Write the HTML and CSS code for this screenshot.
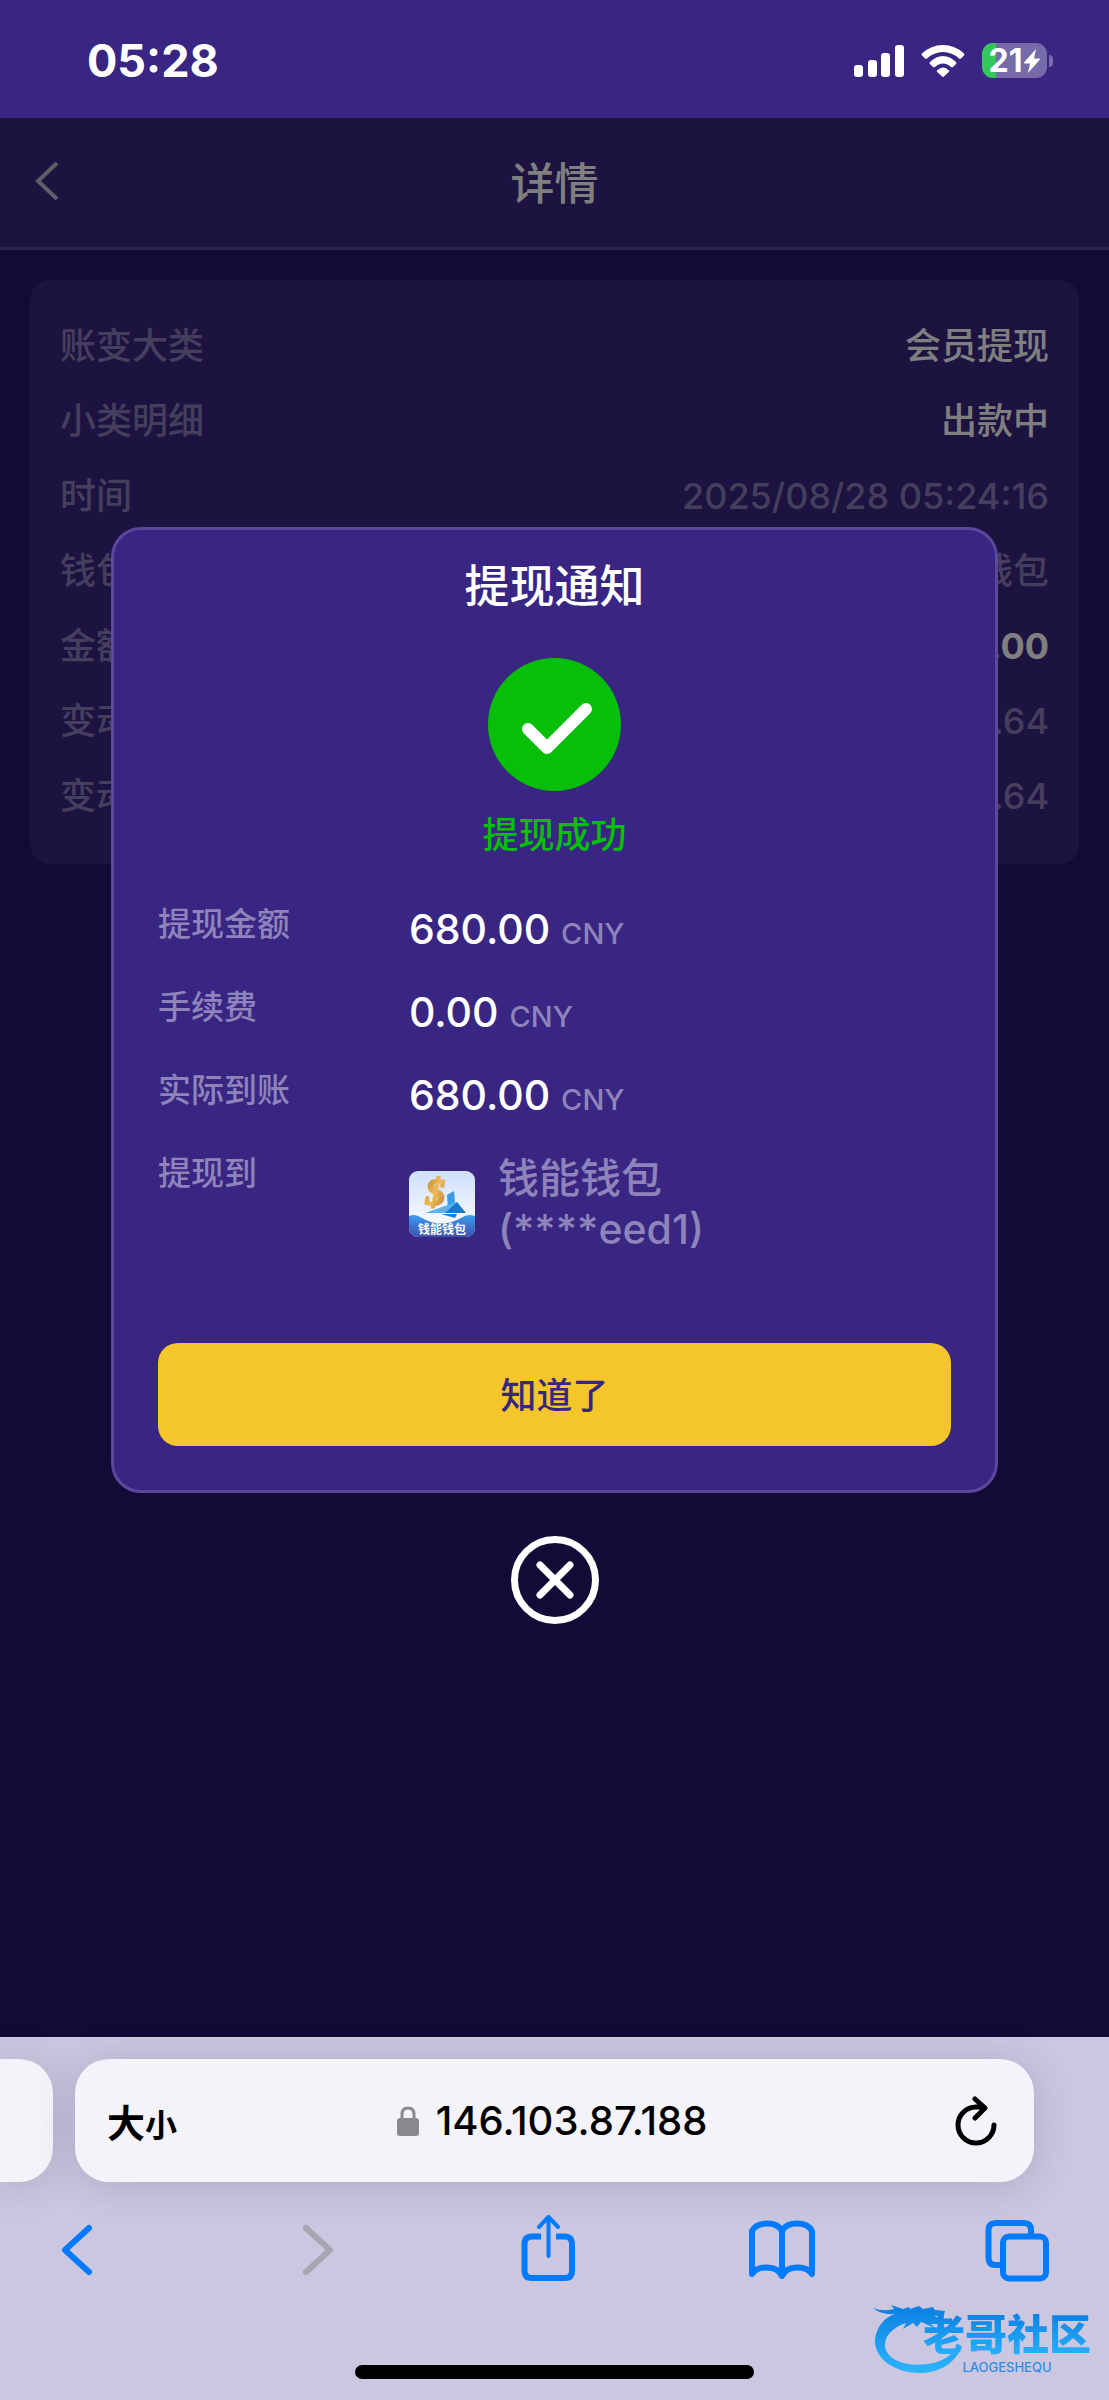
FILE: index.html
```
<!DOCTYPE html>
<html lang="zh-CN">
  <head>
    <meta charset="UTF-8" />
    <meta name="viewport" content="width=device-width, initial-scale=1.0" />
    <title>详情</title>
    <link rel="stylesheet" href="styles.css">
  </head>
  <body>
    <div class="status-bar">
      <time>05:28</time>
      <div class="status-icons">
        <svg width="50" height="32" viewBox="0 0 50 32" fill="#fff">
          <rect x="0" y="20" width="9" height="12" rx="3" />
          <rect x="14" y="15" width="9" height="17" rx="3" />
          <rect x="27" y="8" width="9" height="24" rx="3" />
          <rect x="41" y="0" width="9" height="32" rx="3" />
        </svg>
        <svg width="44" height="32" viewBox="0 0 44 32" fill="#fff">
          <path d="M1 8.500Q10 0 22 0T43 8.500Q44 9.500 43 10.500L40 13.500Q39 14 38 13.500Q31 7 22 7T6 13.500Q5 14 4 13.500L1 10.500Q0 9.500 1 8.500Z" />
          <path d="M9 17Q15 11 22 11T35 17Q36 18 35 19L32 22Q31 22.500 30 22Q26.500 18.500 22 18.500T14 22Q13 22.500 12 22L9 19Q8 18 9 17Z" />
          <path d="M16 25.500Q19 22.500 22 22.500T28 25.500Q28.500 26 28 26.700L23 31.500Q22 32.300 21 31.500L16 26.700Q15.500 26 16 25.500Z" />
        </svg>
        <div class="battery">
          <span>21</span>
          <svg width="16" height="24" viewBox="0 0 16 24" fill="#fff"><path d="M12 0L0 13.500Q0 14.500 1 14.500H6L4 24L16 10.500Q16 9.500 15 9.500H10Z" /></svg>
        </div>
      </div>
    </div>

    <main>
      <header class="page-header">
        <button type="button" class="back" aria-label="返回">
          <svg width="24" height="38" viewBox="0 0 24 38" fill="none" stroke="currentColor" stroke-width="4"><path d="M22 1L3 19L22 37" /></svg>
        </button>
        <h1>详情</h1>
      </header>

      <dl class="card">
        <div><dt>账变大类</dt><dd class="strong">会员提现</dd></div>
        <div><dt>小类明细</dt><dd class="strong">出款中</dd></div>
        <div><dt>时间</dt><dd>2025/08/28 05:24:16</dd></div>
        <div><dt>钱包</dt><dd>钱包</dd></div>
        <div><dt>金额</dt><dd class="amount">680.00</dd></div>
        <div><dt>变动前</dt><dd>.64</dd></div>
        <div><dt>变动后</dt><dd>.64</dd></div>
      </dl>

      <div class="overlay">
        <section class="modal" role="dialog" aria-labelledby="notice-title">
          <h2 id="notice-title">提现通知</h2>
          <svg class="check" width="133" height="133" viewBox="0 0 133 133">
            <circle cx="66.500" cy="66.500" r="66.500" fill="#06bf06" />
            <path d="M40 71L59 90L98 51" fill="none" stroke="#fff" stroke-width="12" stroke-linecap="round" stroke-linejoin="round" />
          </svg>
          <p class="result">提现成功</p>
          <dl class="details">
            <dt>提现金额</dt>
            <dd>680.00 <small>CNY</small></dd>
            <dt>手续费</dt>
            <dd>0.00 <small>CNY</small></dd>
            <dt>实际到账</dt>
            <dd>680.00 <small>CNY</small></dd>
            <dt>提现到</dt>
            <dd class="wallet">
              <svg width="66" height="66" viewBox="0 0 66 66">
                <defs>
                  <linearGradient id="sky" x2="0" y2="1">
                    <stop offset="0" stop-color="#cfe0fb" />
                    <stop offset="1" stop-color="#fff" />
                  </linearGradient>
                  <linearGradient id="sea" x2="0" y2="1">
                    <stop offset="0" stop-color="#3b9df0" />
                    <stop offset="1" stop-color="#3c51ac" />
                  </linearGradient>
                  <linearGradient id="gold" x2="1" y2="1">
                    <stop offset="0" stop-color="#b56a1c" />
                    <stop offset=".5" stop-color="#eebd5c" />
                    <stop offset="1" stop-color="#b8741d" />
                  </linearGradient>
                  <clipPath id="tile"><rect width="66" height="66" rx="9" /></clipPath>
                </defs>
                <g clip-path="url(#tile)">
                  <rect width="66" height="66" fill="url(#sky)" />
                  <path d="M38 24L45 20L46 31L39 37Z" fill="#3d9ae6" />
                  <path d="M17 42L48 31L57 42Z" fill="#1878d0" />
                  <path d="M17 42L48 31L36 42Z" fill="#55b5ef" />
                  <text x="17" y="34" class="coin" fill="url(#gold)" stroke="url(#gold)">$</text>
                  <path d="M32 43H48L46 47Z" fill="#1f7cd3" />
                  <path d="M0 45Q6 42 13 47Q32 58 52 47Q59 42 66 45V66H0Z" fill="url(#sea)" />
                  <text x="33" y="63" class="coin-name" text-anchor="middle" fill="#fff">钱能钱包</text>
                </g>
              </svg>
              <p>
                <span>钱能钱包</span>
                <span>(****eed1)</span>
              </p>
            </dd>
          </dl>
          <button type="button" class="confirm">知道了</button>
        </section>
        <button type="button" class="close" aria-label="关闭">
          <svg width="88" height="88" viewBox="0 0 88 88" fill="none" stroke="#fff" stroke-width="7" stroke-linecap="round">
            <circle cx="44" cy="44" r="40.500" />
            <path d="M29 29L59 59M59 29L29 59" />
          </svg>
        </button>
      </div>
    </main>

    <footer class="browser">
      <div class="tabs">
        <div class="prev-tab"></div>
        <div class="address">
          <button type="button" class="text-size" aria-label="大小"><span>大</span><small>小</small></button>
          <button type="button" class="url">
            <svg width="22" height="30" viewBox="0 0 22 30"><rect y="12" width="22" height="18" rx="3" fill="#8a898e" /><path d="M5 13V8Q5 2 11 2T17 8V13" fill="none" stroke="#8a898e" stroke-width="3" /></svg>
            146.103.87.188
          </button>
          <button type="button" class="reload" aria-label="刷新">
            <svg width="42" height="50" viewBox="0 0 42 50" fill="none" stroke="#000" stroke-width="5" stroke-linecap="round" stroke-linejoin="round"><path d="M39 29A18 18 0 1 1 21 11H29M20 3L30 12L20 22" /></svg>
          </button>
        </div>
      </div>
      <nav class="toolbar">
        <button type="button" aria-label="后退">
          <svg viewBox="0 0 66 70"><path d="M45 13L21 35L45 57" /></svg>
        </button>
        <button type="button" aria-label="前进" disabled>
          <svg viewBox="0 0 66 70"><path d="M27 13L51 35L27 57" /></svg>
        </button>
        <button type="button" aria-label="分享">
          <svg viewBox="0 0 66 70">
            <path d="M27 21.500H18Q10.500 21.500 10.500 29V56Q10.500 63 18 63H51Q58 63 58 56V29Q58 21.500 51 21.500H42" stroke-linecap="butt" />
            <path d="M34.500 41V2M25 12L34.500 2L44 12" stroke-width="4" />
          </svg>
        </button>
        <button type="button" aria-label="书签">
          <svg viewBox="0 0 66 70">
            <path d="M33 16C28 6 8 6 3 16V59C9 50 28 50 33 61C38 50 57 50 63 59V16C58 6 38 6 33 16ZV60" />
          </svg>
        </button>
        <button type="button" aria-label="标签页">
          <svg viewBox="0 0 66 70">
            <path d="M17 50H12Q4.500 50 4.500 43V15Q4.500 8 12 8H40Q47 8 47 15V21" stroke-linecap="butt" />
            <rect x="19" y="21.500" width="43" height="42" rx="6" />
          </svg>
        </button>
      </nav>
      <div class="home-indicator"></div>

      <div class="watermark">
        <svg width="92" height="70" viewBox="0 0 92 70">
          <defs>
            <linearGradient id="dragon" x2="0" y2="1">
              <stop offset="0" stop-color="#0a7fe0" />
              <stop offset="1" stop-color="#2cb5ff" />
            </linearGradient>
          </defs>
          <path fill="url(#dragon)" d="M0 4Q10 8 21 5L18 1L30 5L36 3L37 5L46 2L50 5L60 3L62 6L72 7L71 11L61 12L70 16L68 20L56 18L62 24L48 18L44 23L40 19L30 25L33 19C18 24 11 33 12 43C15 57 34 63 55 60C70 58 81 50 86 40L88 44C82 59 66 69 47 69C20 69 1 53 2 36C3 23 12 13 22 10Q8 11 0 4Z" />
        </svg>
        <p><strong>老哥社区</strong><small>LAOGESHEQU</small></p>
      </div>
    </footer>
  </body>
</html>
```
FILE: styles.css
```
* {
  box-sizing: border-box;
  margin: 0;
  padding: 0;
}
body {
  display: flex;
  flex-direction: column;
  min-height: 100vh;
  background: #281470;
  color: #fff;
  font-family: Inter, "Noto Sans CJK SC", sans-serif;
  font-size: 36px;
  font-weight: 500;
}
button {
  border: 0;
  background: none;
  color: inherit;
  font: inherit;
  cursor: pointer;
}
svg {
  display: block;
  flex-shrink: 0;
}

/* Phone status bar */
.status-bar {
  display: flex;
  align-items: center;
  justify-content: space-between;
  height: 118px;
  padding: 3px 57px 0 87px;
  background: #382682;

  & time {
    font-size: 45px;
    font-weight: 700;
  }
}
.status-icons {
  display: flex;
  align-items: center;
  gap: 17px;
}
.battery {
  position: relative;
  display: flex;
  align-items: center;
  justify-content: center;
  gap: 2px;
  width: 65px;
  height: 35px;
  margin-right: 5px;
  border-radius: 11px;
  background: linear-gradient(to right, #34c759 21%, #776aa9 21%);
  font-size: 32px;
  font-weight: 700;

  &::after {
    content: "";
    position: absolute;
    left: 67px;
    width: 4px;
    height: 12px;
    border-radius: 0 6px 6px 0;
    background: #776aa9;
  }
}

/* Detail page */
main {
  position: relative;
  flex: 1;
}
.page-header {
  display: grid;
  grid-template-columns: 1fr auto 1fr;
  align-items: center;
  height: 132px;
  padding: 0 35px 3px;
  border-bottom: 3px solid #5a489b;
  background: #3a2682;

  & h1 {
    font-size: 44px;
    font-weight: 500;
  }
}
.back {
  justify-self: start;
  color: #c0bccf;
}
.card {
  margin: 30px;
  padding: 29px 30px 30px;
  border-radius: 20px;
  background: #3a2682;
  color: #8a7cba;

  & div {
    display: flex;
    justify-content: space-between;
    line-height: 75px;
  }
  & .strong {
    color: #fff;
  }
  & .amount {
    color: #fff;
    font-weight: 700;
  }
}

/* Withdrawal notice */
.overlay {
  position: absolute;
  inset: 0;
  display: flex;
  flex-direction: column;
  align-items: center;
  justify-content: center;
  gap: 43px;
  padding-bottom: 4px;
  background: rgba(0, 0, 0, 0.5);
}
.modal {
  display: flex;
  flex-direction: column;
  align-items: center;
  width: 80%;
  padding: 25px 44px 44px;
  border: 3px solid #5a489b;
  border-radius: 30px;
  background: #382682;

  & h2 {
    font-size: 45px;
    font-weight: 500;
    line-height: 64px;
  }
}
.check {
  margin-top: 39px;
}
.result {
  margin-top: 19px;
  color: #06bf06;
  line-height: 50px;
}
.details {
  display: grid;
  grid-template-columns: 251px 1fr;
  row-gap: 33px;
  width: 100%;
  margin: 44px 0 88px;
  color: #8f83bc;

  & dt {
    font-size: 33px;
    line-height: 40px;
  }
  & dd {
    color: #fff;
    font-size: 41px;
    line-height: 50px;
  }
  & small {
    color: #8f83bc;
    font-size: 29px;
    line-height: 1;
  }
  & .wallet {
    display: flex;
    align-items: center;
    gap: 23px;
    color: #8f83bc;
  }
  & .wallet span {
    display: block;
    line-height: 51px;
  }
}
.coin {
  font: italic 700 38px "Liberation Serif", serif;
  stroke-width: 2;
}
.coin-name {
  font: 700 12px "Noto Sans CJK SC", sans-serif;
}
.confirm {
  width: 100%;
  height: 103px;
  padding-bottom: 4px;
  border-radius: 20px;
  background: #f4c62b;
  color: #382682;
}

/* Browser controls */
.browser {
  position: relative;
  padding-top: 22px;
  background: #ccc7e0;
  color: #000;
}
.tabs {
  display: flex;
  gap: 22px;
  height: 123px;
  padding-right: 75px;
}
.prev-tab {
  width: 53px;
  border-radius: 0 34px 34px 0;
  background: #f4f3f9;
  box-shadow: 0 4px 40px rgba(60, 50, 90, 0.2);
}
.address {
  flex: 1;
  display: grid;
  grid-template-columns: 1fr auto 1fr;
  align-items: center;
  padding: 0 37px 0 32px;
  border-radius: 34px;
  background: #f4f3f9;
  box-shadow: 0 4px 40px rgba(60, 50, 90, 0.2);
}
.text-size {
  justify-self: start;
  font-size: 38px;
  font-weight: 700;

  & small {
    font-size: 32px;
  }
}
.url {
  display: flex;
  align-items: center;
  gap: 17px;
  font-size: 40px;
}
.reload {
  justify-self: end;
}
.toolbar {
  display: flex;
  justify-content: space-between;
  padding: 33px 59px 0 44px;
  color: #007aff;

  & svg {
    width: 66px;
    height: 70px;
    fill: none;
    stroke: currentColor;
    stroke-width: 6;
    stroke-linecap: round;
    stroke-linejoin: round;
  }
  & button:disabled {
    color: #a8a5b3;
  }
}
.home-indicator {
  width: 36%;
  height: 14px;
  margin: 80px auto 21px;
  border-radius: 7px;
  background: #000;
}
.watermark {
  position: absolute;
  right: 18px;
  bottom: 26px;
  display: flex;
  align-items: flex-end;

  & p {
    display: flex;
    flex-direction: column;
    align-items: center;
    margin-left: -42px;
  }
  & strong {
    background: linear-gradient(#0a7fe0, #2cb5ff);
    background-clip: text;
    color: transparent;
    font-size: 42px;
    font-weight: 900;
    line-height: 50px;
  }
  & small {
    color: #2a8fe4;
    font-size: 13px;
    line-height: 14px;
  }
}
```
